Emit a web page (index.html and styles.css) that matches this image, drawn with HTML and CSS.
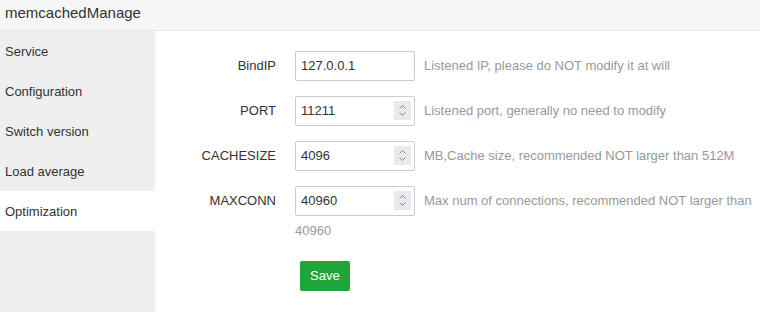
FILE: index.html
```html
<!DOCTYPE html>
<html lang="en">
<head>
    <meta charset="UTF-8">
    <title>memcachedManage</title>
    <link rel="stylesheet" href="styles.css">
</head>
<body>
    <div class="app">
        <header class="top">memcachedManage</header>
        <div class="main">
            <nav class="side">
                <a class="item">Service</a>
                <a class="item">Configuration</a>
                <a class="item">Switch version</a>
                <a class="item">Load average</a>
                <a class="item active">Optimization</a>
            </nav>
            <section class="content">
                <div class="row">
                    <label class="label">BindIP</label>
                    <div class="control">
                        <span class="field"><input class="input" type="text" value="127.0.0.1"></span><span class="hint">Listened IP, please do NOT modify it at will</span>
                    </div>
                </div>
                <div class="row">
                    <label class="label">PORT</label>
                    <div class="control">
                        <span class="field"><input class="input" type="text" value="11211"><span class="spin"><svg viewBox="0 0 17 19" width="17" height="19"><path d="M5.5 7.5 L8.5 4.5 L11.5 7.5 M5.5 11.5 L8.5 14.5 L11.5 11.5" fill="none" stroke="#8a8a8a" stroke-width="1"/></svg></span></span><span class="hint">Listened port, generally no need to modify</span>
                    </div>
                </div>
                <div class="row">
                    <label class="label">CACHESIZE</label>
                    <div class="control">
                        <span class="field"><input class="input" type="text" value="4096"><span class="spin"><svg viewBox="0 0 17 19" width="17" height="19"><path d="M5.5 7.5 L8.5 4.5 L11.5 7.5 M5.5 11.5 L8.5 14.5 L11.5 11.5" fill="none" stroke="#8a8a8a" stroke-width="1"/></svg></span></span><span class="hint">MB,Cache size, recommended NOT larger than 512M</span>
                    </div>
                </div>
                <div class="row">
                    <label class="label">MAXCONN</label>
                    <div class="control">
                        <span class="field"><input class="input" type="text" value="40960"><span class="spin"><svg viewBox="0 0 17 19" width="17" height="19"><path d="M5.5 7.5 L8.5 4.5 L11.5 7.5 M5.5 11.5 L8.5 14.5 L11.5 11.5" fill="none" stroke="#8a8a8a" stroke-width="1"/></svg></span></span><span class="hint">Max num of connections, recommended NOT larger than 40960</span>
                    </div>
                </div>
                <div class="row">
                    <span class="label"></span>
                    <div class="control">
                        <button class="btn">Save</button>
                    </div>
                </div>
            </section>
        </div>
    </div>
</body>
</html>
```

FILE: styles.css
```css
body { margin: 0; font-family: "Liberation Sans", Arial, sans-serif; font-size: 13px; color: #333; background: #fff; }
.app { height: 100vh; display: flex; flex-direction: column; overflow: hidden; }
.top { height: 30px; line-height: 25px; padding-left: 5px; font-size: 15px; color: #333; background: #f6f6f6; border-bottom: 1px solid #e8e8e8; flex-shrink: 0; }
.main { flex: 1; display: flex; min-height: 0; }
.side { width: 155px; background: #efefef; flex-shrink: 0; }
.item { display: block; height: 40px; line-height: 42px; padding-left: 5px; color: #333; cursor: pointer; overflow: hidden; }
.item.active { background: #fff; }
.content { flex: 1; padding-top: 20px; }
.row { display: flex; margin-bottom: 15px; }
.label { width: 140px; padding-right: 19px; box-sizing: border-box; text-align: right; line-height: 30px; color: #333; flex-shrink: 0; }
.control { flex: 1; line-height: 30px; }
.field { position: relative; display: inline-block; vertical-align: top; height: 30px; }
.input { width: 120px; height: 30px; box-sizing: border-box; border: 1px solid #ccc; border-radius: 2px; padding: 0 5px; font: inherit; color: #333; outline: none; vertical-align: top; }
.spin { position: absolute; right: 4px; top: 5px; width: 17px; height: 19px; background: #e9e9ee; }
.spin svg { display: block; }
.hint { color: #999; margin-left: 9px; }
.btn { margin-left: 5px; height: 30px; padding: 0 10px; border: none; border-radius: 2px; background: #20a53a; color: #fff; font: inherit; cursor: pointer; vertical-align: top; }
```
